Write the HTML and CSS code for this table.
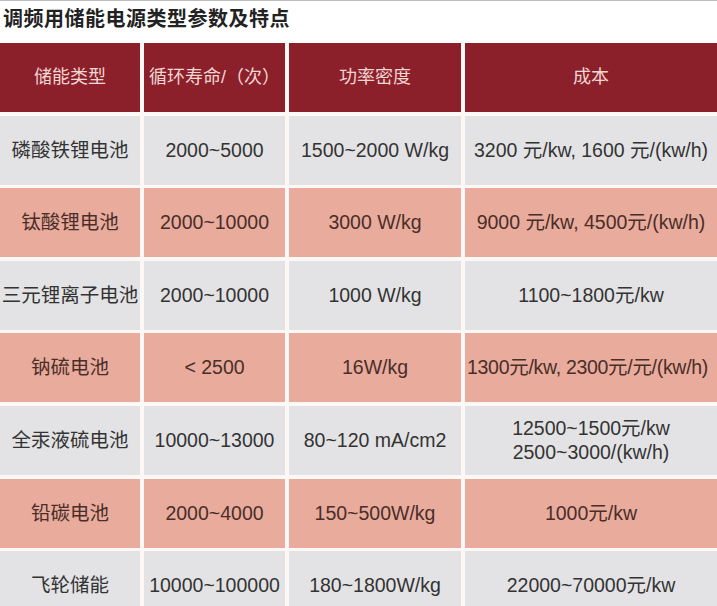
FILE: index.html
```html
<!DOCTYPE html>
<html lang="zh-CN">
<head>
<meta charset="utf-8">
<title>调频用储能电源类型参数及特点</title>
<link rel="stylesheet" href="styles.css">
</head>
<body>
<div class="page">
  <h1 class="title">调频用储能电源类型参数及特点</h1>
  <div class="table">
    <div class="cell head">储能类型</div>
    <div class="cell head">循环寿命/（次）</div>
    <div class="cell head">功率密度</div>
    <div class="cell head">成本</div>

    <div class="cell gray">磷酸铁锂电池</div>
    <div class="cell gray">2000~5000</div>
    <div class="cell gray">1500~2000 W/kg</div>
    <div class="cell gray">3200 元/kw, 1600 元/(kw/h)</div>

    <div class="cell pink">钛酸锂电池</div>
    <div class="cell pink">2000~10000</div>
    <div class="cell pink">3000 W/kg</div>
    <div class="cell pink">9000 元/kw, 4500元/(kw/h)</div>

    <div class="cell gray">三元锂离子电池</div>
    <div class="cell gray">2000~10000</div>
    <div class="cell gray">1000 W/kg</div>
    <div class="cell gray">1100~1800元/kw</div>

    <div class="cell pink">钠硫电池</div>
    <div class="cell pink">&lt; 2500</div>
    <div class="cell pink">16W/kg</div>
    <div class="cell pink tight">1300元/kw, 2300元/元/(kw/h)</div>

    <div class="cell gray">全汞液硫电池</div>
    <div class="cell gray">10000~13000</div>
    <div class="cell gray">80~120 mA/cm2</div>
    <div class="cell gray two">12500~1500元/kw<br>2500~3000/(kw/h)</div>

    <div class="cell pink">铅碳电池</div>
    <div class="cell pink">2000~4000</div>
    <div class="cell pink">150~500W/kg</div>
    <div class="cell pink">1000元/kw</div>

    <div class="cell gray">飞轮储能</div>
    <div class="cell gray">10000~100000</div>
    <div class="cell gray">180~1800W/kg</div>
    <div class="cell gray">22000~70000元/kw</div>
  </div>
</div>
</body>
</html>
```

FILE: styles.css
```css
html, body {
  margin: 0;
  padding: 0;
  background: #ffffff;
}
.page {
  width: 717px;
  height: 606px;
  overflow: hidden;
  border-top: 1px solid #bdbdbd;
  box-sizing: border-box;
  font-family: "Liberation Sans", "Noto Sans CJK SC", sans-serif;
}
.title {
  margin: 0;
  height: 42px;
  padding: 4px 0 0 3px;
  box-sizing: border-box;
  font-family: "Noto Sans CJK SC", sans-serif;
  font-size: 20px;
  line-height: 26px;
  font-weight: 700;
  color: #222222;
  letter-spacing: 0.5px;
}
.table {
  display: grid;
  grid-template-columns: 140px 141px 172px 1fr;
  grid-auto-rows: 69px;
  gap: 3.6px 4px;
  background: #fdf8f6;
}
.cell {
  display: flex;
  align-items: center;
  justify-content: center;
  text-align: center;
  font-size: 19.5px;
  line-height: 25px;
  white-space: nowrap;
}
.head {
  background: #8b202b;
  color: #f2d6d3;
  font-size: 18px;
}
.gray {
  background: #e3e3e5;
  color: #333333;
}
.pink {
  background: #e8ab9c;
  color: #4a2e29;
}
.tight {
  letter-spacing: -0.3px;
  justify-content: flex-start;
  padding-left: 2px;
}
.two {
  line-height: 24px;
}
```
